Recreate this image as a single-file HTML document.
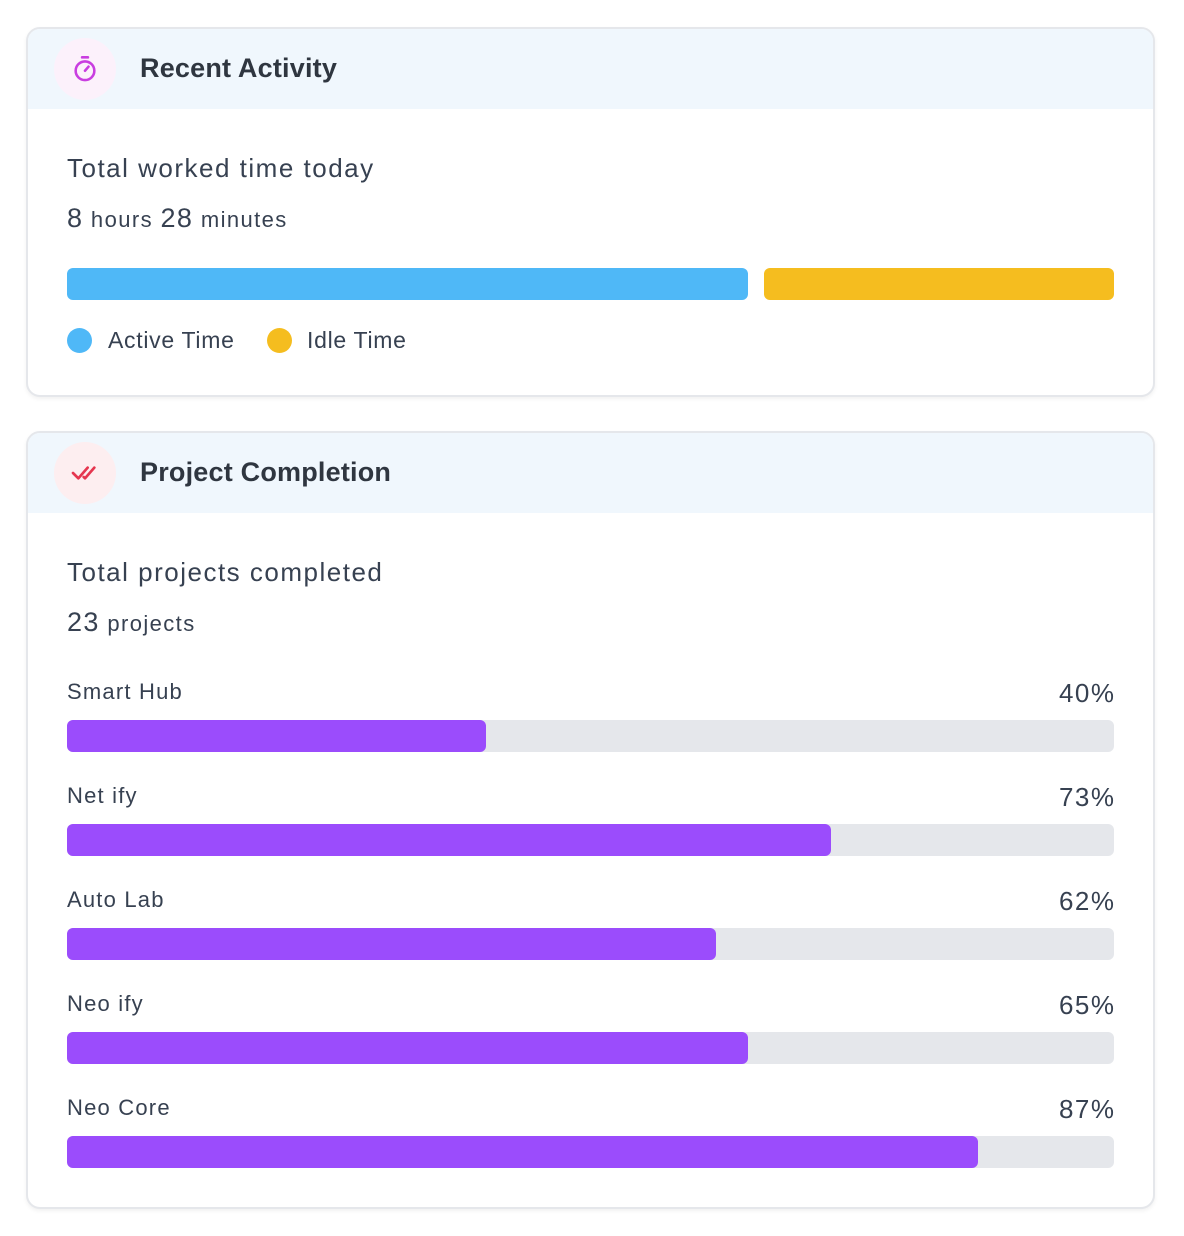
<!DOCTYPE html>
<html><head><style>
*{box-sizing:border-box;margin:0;padding:0}
body{width:1184px;height:1236px;background:#fff;font-family:"Liberation Sans",sans-serif;color:#374151;position:relative}
.card{position:absolute;left:26px;width:1129px;border:2px solid #e5e7eb;border-radius:14px;background:#fff;overflow:hidden;box-shadow:0 2px 4px rgba(0,0,0,.06)}
.hd{height:80px;background:#f0f7fd;position:relative}
.ic{position:absolute;left:26px;top:9px;width:62px;height:62px;border-radius:50%;display:flex;align-items:center;justify-content:center}
.ht{position:absolute;left:112px;top:24px;font-size:27px;color:#2f3640;font-weight:bold;letter-spacing:0.2px}
.a{position:absolute;left:39px}
.bar{position:absolute;height:32px;border-radius:6px}
.l{font-size:22px;letter-spacing:1.2px}
.p{position:absolute;right:39px;font-size:26px;letter-spacing:1.5px;margin-right:-1.5px}
</style></head><body>
<div class="card" style="top:27px;height:370px">
 <div class="hd">
  <div class="ic" style="background:#fcf1fb"><svg width="28" height="28" viewBox="0 0 24 24" fill="none" stroke="#c93ee0" stroke-width="2.2" stroke-linecap="round"><path d="M9.5 2h5"/><circle cx="12" cy="13.5" r="8"/><path d="M12 13.5l3-3.5"/></svg></div>
  <div class="ht">Recent Activity</div>
 </div>
 <div class="a" style="top:124px;font-size:26px;letter-spacing:1.5px">Total worked time today</div>
 <div class="a" style="top:174px;font-size:22px;letter-spacing:1.4px"><span style="font-size:27px">8</span> hours <span style="font-size:27px">28</span> minutes</div>
 <div class="bar" style="left:39px;top:239px;width:681px;background:#4fb8f7"></div>
 <div class="bar" style="left:736px;top:239px;width:350px;background:#f5bd1f"></div>
 <div style="position:absolute;left:39px;top:299px;width:25px;height:25px;border-radius:50%;background:#4fb8f7"></div>
 <div class="a" style="left:80px;top:298px;font-size:23px;letter-spacing:0.7px">Active Time</div>
 <div style="position:absolute;left:239px;top:299px;width:25px;height:25px;border-radius:50%;background:#f5bd1f"></div>
 <div class="a" style="left:279px;top:298px;font-size:23px;letter-spacing:0.7px">Idle Time</div>
</div>
<div class="card" style="top:431px;height:778px">
 <div class="hd">
  <div class="ic" style="background:#fdeef0"><svg width="32" height="32" viewBox="0 0 24 24" fill="none" stroke="#e5364f" stroke-width="2" stroke-linecap="round" stroke-linejoin="round"><path d="M3 12l4 4 7-8"/><path d="M11 15l1 1 7-8"/></svg></div>
  <div class="ht">Project Completion</div>
 </div>
 <div class="a" style="top:124px;font-size:26px;letter-spacing:1.5px">Total projects completed</div>
 <div class="a" style="top:174px;font-size:22px;letter-spacing:1.4px"><span style="font-size:27px">23</span> projects</div>
 <div class="a l" style="top:246px">Smart Hub</div><div class="p" style="top:245px">40%</div>
 <div class="bar" style="left:39px;top:287px;width:1047px;background:#e5e7eb"></div><div class="bar" style="left:39px;top:287px;width:419px;background:#9b4cfc"></div>
 <div class="a l" style="top:350px">Net ify</div><div class="p" style="top:349px">73%</div>
 <div class="bar" style="left:39px;top:391px;width:1047px;background:#e5e7eb"></div><div class="bar" style="left:39px;top:391px;width:764px;background:#9b4cfc"></div>
 <div class="a l" style="top:454px">Auto Lab</div><div class="p" style="top:453px">62%</div>
 <div class="bar" style="left:39px;top:495px;width:1047px;background:#e5e7eb"></div><div class="bar" style="left:39px;top:495px;width:649px;background:#9b4cfc"></div>
 <div class="a l" style="top:558px">Neo ify</div><div class="p" style="top:557px">65%</div>
 <div class="bar" style="left:39px;top:599px;width:1047px;background:#e5e7eb"></div><div class="bar" style="left:39px;top:599px;width:681px;background:#9b4cfc"></div>
 <div class="a l" style="top:662px">Neo Core</div><div class="p" style="top:661px">87%</div>
 <div class="bar" style="left:39px;top:703px;width:1047px;background:#e5e7eb"></div><div class="bar" style="left:39px;top:703px;width:911px;background:#9b4cfc"></div>
</div>
</body></html>
